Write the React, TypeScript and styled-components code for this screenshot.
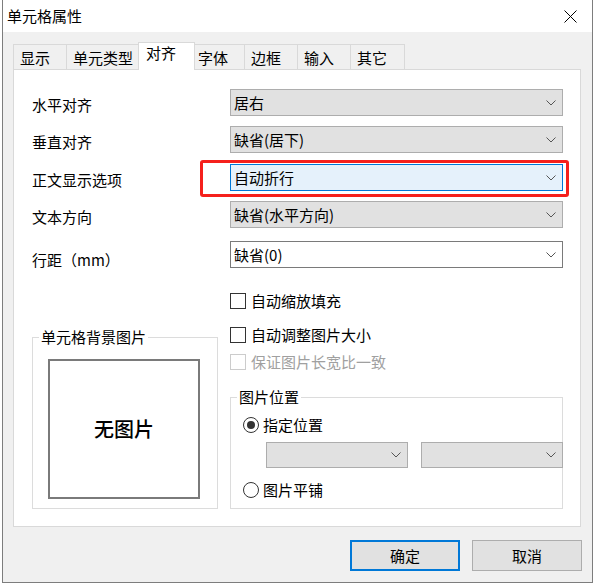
import React from "react";
import styled, { createGlobalStyle, css } from "styled-components";

const GlobalStyle = createGlobalStyle`
  * { box-sizing: border-box; }
  html, body {
    margin: 0;
    padding: 0;
    background: #ffffff;
  }
  body {
    font-family: "Noto Sans CJK SC", "Microsoft YaHei", sans-serif;
    font-size: 15px;
    line-height: 20px;
    color: #000;
  }
`;

const Chevron = () => (
  <svg width="10" height="6" viewBox="0 0 10 6">
    <polyline points="0.5,0.5 5,5 9.5,0.5" fill="none" stroke="#555" strokeWidth="1" />
  </svg>
);

const CloseIcon = () => (
  <svg width="13" height="13" viewBox="0 0 13 13">
    <line x1="0.5" y1="0.5" x2="12.5" y2="12.5" stroke="#000" strokeWidth="1" />
    <line x1="12.5" y1="0.5" x2="0.5" y2="12.5" stroke="#000" strokeWidth="1" />
  </svg>
);

type SelectKind = "grey" | "focus" | "edit";

export default function App() {
  const tabs = ["显示", "单元类型", "对齐", "字体", "边框", "输入", "其它"];

  return (
    <>
      <GlobalStyle />
      <Dialog>
        <TitleBar>
          <span>单元格属性</span>
          <CloseIcon />
        </TitleBar>

        <Body>
          <TabStrip>
            {tabs.map((t) => (
              <Tab key={t} $active={t === "对齐"}>
                {t}
              </Tab>
            ))}
          </TabStrip>

          <Panel>
            <Row $mt={0}>
              <Label>水平对齐</Label>
              <Select $kind="grey">
                <span>居右</span>
                <Chevron />
              </Select>
            </Row>
            <Row $mt={10}>
              <Label>垂直对齐</Label>
              <Select $kind="grey">
                <span>缺省(居下)</span>
                <Chevron />
              </Select>
            </Row>
            <Row $mt={11}>
              <Label>正文显示选项</Label>
              <SelectCell>
                <Select $kind="focus">
                  <span>自动折行</span>
                  <Chevron />
                </Select>
                <Highlight />
              </SelectCell>
            </Row>
            <Row $mt={10}>
              <Label>文本方向</Label>
              <Select $kind="grey">
                <span>缺省(水平方向)</span>
                <Chevron />
              </Select>
            </Row>
            <Row $mt={13}>
              <Label $low>行距（mm）</Label>
              <Select $kind="edit">
                <span>缺省(0)</span>
                <Chevron />
              </Select>
            </Row>

            <Lower>
              <Group $width={186}>
                <Legend>单元格背景图片</Legend>
                <PicBox>无图片</PicBox>
              </Group>

              <RightColumn>
                <CheckRow $mt={0}>
                  <Box />
                  <span>自动缩放填充</span>
                </CheckRow>
                <CheckRow $mt={18}>
                  <Box />
                  <span>自动调整图片大小</span>
                </CheckRow>
                <CheckRow $mt={11} $disabled>
                  <Box $disabled />
                  <span>保证图片长宽比一致</span>
                </CheckRow>

                <Group $width={333} $mt={17} $pb={10}>
                  <Legend>图片位置</Legend>
                  <RadioRow $mt={10}>
                    <Radio $checked />
                    <span>指定位置</span>
                  </RadioRow>
                  <SmallSelects>
                    <Select $kind="grey" $h={26}>
                      <span />
                      <Chevron />
                    </Select>
                    <Select $kind="grey" $h={26}>
                      <span />
                      <Chevron />
                    </Select>
                  </SmallSelects>
                  <RadioRow $mt={14}>
                    <Radio />
                    <span>图片平铺</span>
                  </RadioRow>
                </Group>
              </RightColumn>
            </Lower>
          </Panel>

          <Footer>
            <Button $primary>确定</Button>
            <Button>取消</Button>
          </Footer>
        </Body>
      </Dialog>
    </>
  );
}

const Dialog = styled.div`
  width: 591px;
  height: 583px;
  margin-left: 2px;
  border: 1px solid #7d7d7d;
  border-top: none;
  background: #f0f0f0;
  display: flex;
  flex-direction: column;
`;

const TitleBar = styled.div`
  height: 32px;
  flex: none;
  background: #fff;
  display: flex;
  align-items: center;
  justify-content: space-between;
  padding: 0 15px 0 4px;
`;

const Body = styled.div`
  padding: 10px 0 0 10px;
  display: flex;
  flex-direction: column;
`;

const TabStrip = styled.div`
  display: flex;
  align-items: flex-end;
  height: 27px;
`;

const Tab = styled.div<{ $active?: boolean }>`
  min-width: 55px;
  height: 25px;
  padding: 3px 6px 0;
  border: 1px solid #d9d9d9;
  border-bottom: none;
  background: #f0f0f0;
  white-space: nowrap;

  & + & {
    margin-left: -1px;
  }

  ${(p) =>
    p.$active &&
    css`
      position: relative;
      z-index: 1;
      min-width: 57px;
      height: 28px;
      padding: 0 6px 0 7px;
      margin: 0 -2px -1px -2px;
      background: #fff;
      & + & {
        margin-left: -2px;
      }
    `}
`;

const Panel = styled.div`
  width: 568px;
  height: 458px;
  background: #fff;
  border: 1px solid #d9d9d9;
  padding: 19px 17px 0 18px;
`;

const Row = styled.div<{ $mt: number }>`
  display: grid;
  grid-template-columns: 198px 1fr;
  height: 27px;
  margin-top: ${(p) => p.$mt}px;
`;

const Label = styled.div<{ $low?: boolean }>`
  padding-top: ${(p) => (p.$low ? 9 : 6)}px;
  white-space: nowrap;
`;

const selectKinds: Record<SelectKind, ReturnType<typeof css>> = {
  grey: css`
    background: #e1e1e1;
    border: 1px solid #adadad;
  `,
  focus: css`
    background: #e5f1fb;
    border: 1px solid #0078d7;
  `,
  edit: css`
    background: #fff;
    border: 1px solid #7a7a7a;
  `,
};

const Select = styled.div<{ $kind: SelectKind; $h?: number }>`
  height: ${(p) => p.$h ?? 27}px;
  display: flex;
  align-items: center;
  justify-content: space-between;
  padding: 0 6px 0 3px;
  ${(p) => selectKinds[p.$kind]}
`;

const SelectCell = styled.div`
  position: relative;
`;

const Highlight = styled.div`
  position: absolute;
  left: -30px;
  top: -4px;
  right: -6px;
  bottom: -6px;
  border: 3px solid #f5201c;
  border-radius: 3px;
  pointer-events: none;
`;

const Lower = styled.div`
  display: flex;
  align-items: flex-end;
  gap: 12px;
  margin-top: 25px;
`;

const Group = styled.fieldset<{ $width: number; $mt?: number; $pb?: number }>`
  width: ${(p) => p.$width}px;
  min-width: 0;
  margin: ${(p) => p.$mt ?? 0}px 0 0 0;
  padding: 0 0 ${(p) => p.$pb ?? 0}px 0;
  border: 1px solid #dcdcdc;
`;

const Legend = styled.legend`
  margin-left: 6px;
  padding: 0 2px;
  line-height: 20px;
  font-size: 15px;
`;

const PicBox = styled.div`
  width: 152px;
  height: 140px;
  margin: 12px 0 9px 15px;
  border: 2px solid #7a7a7a;
  background: #fff;
  display: flex;
  align-items: center;
  justify-content: center;
  font-size: 20px;
  font-weight: 500;
`;

const RightColumn = styled.div`
  width: 333px;
  display: flex;
  flex-direction: column;
`;

const CheckRow = styled.div<{ $mt: number; $disabled?: boolean }>`
  display: flex;
  align-items: center;
  gap: 5px;
  height: 16px;
  margin-top: ${(p) => p.$mt}px;
  color: ${(p) => (p.$disabled ? "#a0a0a0" : "#000")};
  white-space: nowrap;
`;

const Box = styled.span<{ $disabled?: boolean }>`
  width: 16px;
  height: 16px;
  flex: none;
  background: #fff;
  border: 1px solid ${(p) => (p.$disabled ? "#cccccc" : "#333333")};
`;

const RadioRow = styled.div<{ $mt: number }>`
  display: flex;
  align-items: center;
  gap: 4px;
  height: 16px;
  margin: ${(p) => p.$mt}px 0 0 12px;
  white-space: nowrap;
`;

const Radio = styled.span<{ $checked?: boolean }>`
  width: 16px;
  height: 16px;
  flex: none;
  border: 1px solid #333;
  border-radius: 50%;
  background: #fff;
  display: flex;
  align-items: center;
  justify-content: center;

  &::after {
    content: "";
    width: 8px;
    height: 8px;
    border-radius: 50%;
    background: ${(p) => (p.$checked ? "#333" : "transparent")};
  }
`;

const SmallSelects = styled.div`
  display: flex;
  gap: 13px;
  margin: 9px 0 0 35px;

  & > div {
    width: 142px;
    flex: none;
  }
`;

const Footer = styled.div`
  display: flex;
  justify-content: flex-end;
  gap: 12px;
  padding-right: 10px;
  margin-top: 13px;
`;

const Button = styled.div<{ $primary?: boolean }>`
  width: 110px;
  height: 31px;
  display: flex;
  align-items: center;
  justify-content: center;
  background: #e1e1e1;
  border: ${(p) => (p.$primary ? "2px solid #0078d7" : "1px solid #adadad")};
`;
